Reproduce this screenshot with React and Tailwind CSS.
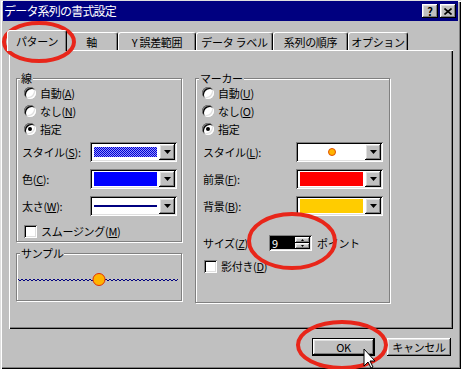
import React from "react";

const raised =
  "shadow-[inset_-1px_-1px_#000,inset_1px_1px_#fff,inset_-2px_-2px_#808080,inset_2px_2px_#dfdfdf]";
const sunken =
  "shadow-[inset_1px_1px_#808080,inset_-1px_-1px_#fff,inset_2px_2px_#000,inset_-2px_-2px_#dfdfdf]";

function Radio({ checked, children }) {
  return (
    <div className="flex items-center h-[18px] gap-[4px]">
      <span className="w-[12px] h-[12px] rounded-full bg-white flex items-center justify-center shadow-[inset_1px_1px_#808080,inset_-1px_-1px_#fff,inset_2px_2px_#000,inset_-2px_-2px_#dfdfdf]">
        {checked && <span className="w-[4px] h-[4px] rounded-full bg-black" />}
      </span>
      <span>{children}</span>
    </div>
  );
}

function Check({ children, className }) {
  return (
    <div className={"flex items-center h-[18px] gap-[4px] " + className}>
      <span className={"w-[13px] h-[13px] bg-white " + sunken} />
      <span>{children}</span>
    </div>
  );
}

function Drop({ children }) {
  return (
    <div className={"w-[87px] h-[20px] bg-white p-[2px] flex " + sunken}>
      <div className="flex-1 flex items-center justify-center px-[2px]">{children}</div>
      <div className={"w-[16px] h-[16px] bg-[#c0c0c0] flex items-center justify-center " + raised}>
        <svg width="7" height="4" viewBox="0 0 7 4">
          <path d="M0 0h7L3.5 4z" fill="#000" />
        </svg>
      </div>
    </div>
  );
}

function Row({ label, children, className }) {
  return (
    <div className={"flex items-center justify-between h-[20px] " + className}>
      <span>{label}</span>
      {children}
    </div>
  );
}

function Tab({ children, w, active }) {
  if (active)
    return (
      <div
        className={
          "relative z-10 -mx-[2px] -mb-[1px] h-[21px] bg-[#c0c0c0] rounded-t-[3px] border-t border-l border-white border-r border-r-black flex items-center justify-center whitespace-nowrap shadow-[inset_-1px_0_#808080] " +
          w
        }
      >
        {children}
      </div>
    );
  return (
    <div
      className={
        "h-[18px] bg-[#c0c0c0] rounded-t-[3px] border-t border-l border-white border-r border-r-black flex items-center justify-center whitespace-nowrap shadow-[inset_-1px_0_#808080] " +
        w
      }
    >
      {children}
    </div>
  );
}

function Wave() {
  let d = "M0 1";
  for (let i = 0; i < 40; i++) d += " l2 2 l2 -2";
  return (
    <svg width="160" height="14" viewBox="0 0 160 14" className="ml-[1px]">
      <path d={d} transform="translate(0 5)" fill="none" stroke="#000080" strokeWidth="1" />
      <circle cx="81" cy="6.5" r="6" fill="#ffb400" stroke="#e03000" strokeWidth="1" />
    </svg>
  );
}

export default function App() {
  return (
    <div className="relative w-[461px] h-[369px] overflow-hidden bg-[#c0c0c0] text-[11px] leading-[14px] tracking-[-0.3px] text-black font-['Noto_Sans_CJK_JP','Liberation_Sans',sans-serif] shadow-[inset_1px_1px_#dfdfdf,inset_2px_2px_#fff,inset_-1px_-1px_#000,inset_-2px_-2px_#808080]">
      {/* title bar */}
      <div className="mt-[1px] mx-[3px] h-[20px] bg-[#000080] flex items-center justify-between pl-[1px] pr-[2px]">
        <span className="text-white text-[12px] tracking-[-0.8px]">データ系列の書式設定</span>
        <div className="flex gap-[2px]">
          <div className={"w-[16px] h-[14px] bg-[#c0c0c0] flex items-center justify-center text-[11px] font-bold leading-none " + raised}>
            ?
          </div>
          <div className={"w-[16px] h-[14px] bg-[#c0c0c0] flex items-center justify-center " + raised}>
            <svg width="8" height="7" viewBox="0 0 8 7">
              <path d="M0.5 0.5l7 6M7.5 0.5l-7 6" stroke="#000" strokeWidth="1.6" />
            </svg>
          </div>
        </div>
      </div>

      {/* tabs */}
      <div className="h-[29px] pl-[9px] flex items-end">
        <Tab w="w-[60px]" active>パターン</Tab>
        <Tab w="w-[53px]">軸</Tab>
        <Tab w="w-[78px]">Y 誤差範囲</Tab>
        <Tab w="w-[77px]">データ ラベル</Tab>
        <Tab w="w-[75px]">系列の順序</Tab>
        <Tab w="w-[60px]">オプション</Tab>
      </div>

      {/* panel */}
      <div className="ml-[9px] w-[444px] h-[279px] pt-[22px] pl-[7px] flex items-start shadow-[inset_1px_1px_#fff,inset_-1px_-1px_#000,inset_-2px_-2px_#808080]">
        <div className="flex flex-col">
          <fieldset className="w-[166px] m-0 p-0 pb-[1px] border border-[#808080] shadow-[inset_1px_1px_#fff,1px_1px_#fff]">
            <legend className="ml-[3px] px-[1px] leading-[12px] bg-[#c0c0c0]">線</legend>
            <div className="pl-[7px]">
              <Radio>
                自動(<u>A</u>)
              </Radio>
              <Radio>
                なし(<u>N</u>)
              </Radio>
              <Radio checked>指定</Radio>
            </div>
            <div className="pl-[5px] pr-[4px]">
              <Row className="mt-[4px]" label={<>スタイル(<u>S</u>):</>}>
                <Drop>
                  <div className="w-full h-[10px] bg-[repeating-conic-gradient(#0000d0_0%_25%,#9090ff_0%_50%)] bg-[length:2px_2px]" />
                </Drop>
              </Row>
              <Row className="mt-[7px]" label={<>色(<u>C</u>):</>}>
                <Drop>
                  <div className="w-full h-[14px] bg-[#0000ff]" />
                </Drop>
              </Row>
              <Row className="mt-[7px]" label={<>太さ(<u>W</u>):</>}>
                <Drop>
                  <div className="w-full h-[2px] bg-[#000080]" />
                </Drop>
              </Row>
            </div>
            <Check className="mt-[6px] pl-[7px]">
              スムージング(<u>M</u>)
            </Check>
          </fieldset>

          <fieldset className="mt-[5px] w-[166px] m-0 p-0 border border-[#808080] shadow-[inset_1px_1px_#fff,1px_1px_#fff]">
            <legend className="ml-[3px] px-[1px] leading-[12px] bg-[#c0c0c0]">サンプル</legend>
            <div className="h-[41px] flex items-center">
              <Wave />
            </div>
          </fieldset>
        </div>

        <fieldset className="ml-[13px] w-[195px] h-[231px] m-0 p-0 border border-[#808080] shadow-[inset_1px_1px_#fff,1px_1px_#fff]">
          <legend className="ml-[3px] px-[1px] leading-[12px] bg-[#c0c0c0]">マーカー</legend>
          <div className="pl-[6px]">
            <Radio>
              自動(<u>U</u>)
            </Radio>
            <Radio>
              なし(<u>O</u>)
            </Radio>
            <Radio checked>指定</Radio>
          </div>
          <div className="pl-[7px] pr-[6px]">
            <Row className="mt-[4px]" label={<>スタイル(<u>L</u>):</>}>
              <Drop>
                <span className="w-[8px] h-[8px] rounded-full bg-[#ffb400] border border-[#e05000]" />
              </Drop>
            </Row>
            <Row className="mt-[7px]" label={<>前景(<u>F</u>):</>}>
              <Drop>
                <div className="w-full h-[14px] bg-[#ff0000]" />
              </Drop>
            </Row>
            <Row className="mt-[7px]" label={<>背景(<u>B</u>):</>}>
              <Drop>
                <div className="w-full h-[14px] bg-[#ffcc00]" />
              </Drop>
            </Row>
          </div>
          <div className="mt-[19px] pl-[7px] h-[16px] flex items-center">
            <span className="w-[66px]">
              サイズ(<u>Z</u>):
            </span>
            <div className={"w-[43px] h-[16px] p-[2px] flex bg-white " + sunken}>
              <div className="flex-1 bg-black text-white leading-[12px] pl-[1px]">9</div>
              <div className="w-[15px] flex flex-col">
                <div className={"flex-1 bg-[#c0c0c0] flex items-center justify-center " + raised}>
                  <svg width="3" height="2" viewBox="0 0 3 2">
                    <path d="M1.5 0L3 2H0z" fill="#000" />
                  </svg>
                </div>
                <div className={"flex-1 bg-[#c0c0c0] flex items-center justify-center " + raised}>
                  <svg width="3" height="2" viewBox="0 0 3 2">
                    <path d="M0 0h3L1.5 2z" fill="#000" />
                  </svg>
                </div>
              </div>
            </div>
            <span className="ml-[5px]">ポイント</span>
          </div>
          <Check className="mt-[6px] pl-[8px]">
            影付き(<u>D</u>)
          </Check>
        </fieldset>
      </div>

      {/* buttons */}
      <div className="mt-[9px] pr-[10px] flex justify-end gap-[12px]">
        <div className={"w-[63px] h-[18px] flex items-center justify-center border border-black " + raised}>OK</div>
        <div className={"w-[64px] h-[18px] flex items-center justify-center " + raised}>キャンセル</div>
      </div>

      {/* annotations */}
      <svg className="absolute inset-0 pointer-events-none" width="461" height="369" viewBox="0 0 461 369">
        <ellipse cx="39" cy="42" rx="35" ry="19" fill="none" stroke="#e8261a" strokeWidth="4" />
        <ellipse cx="292" cy="241" rx="43" ry="27" fill="none" stroke="#e8261a" strokeWidth="4" />
        <ellipse cx="342" cy="345" rx="44" ry="23" fill="none" stroke="#e8261a" strokeWidth="4" />
        <path d="M364 349v17l4-4 3 6 2-1-3-6h5z" fill="#fff" stroke="#000" strokeWidth="1" />
      </svg>
    </div>
  );
}
